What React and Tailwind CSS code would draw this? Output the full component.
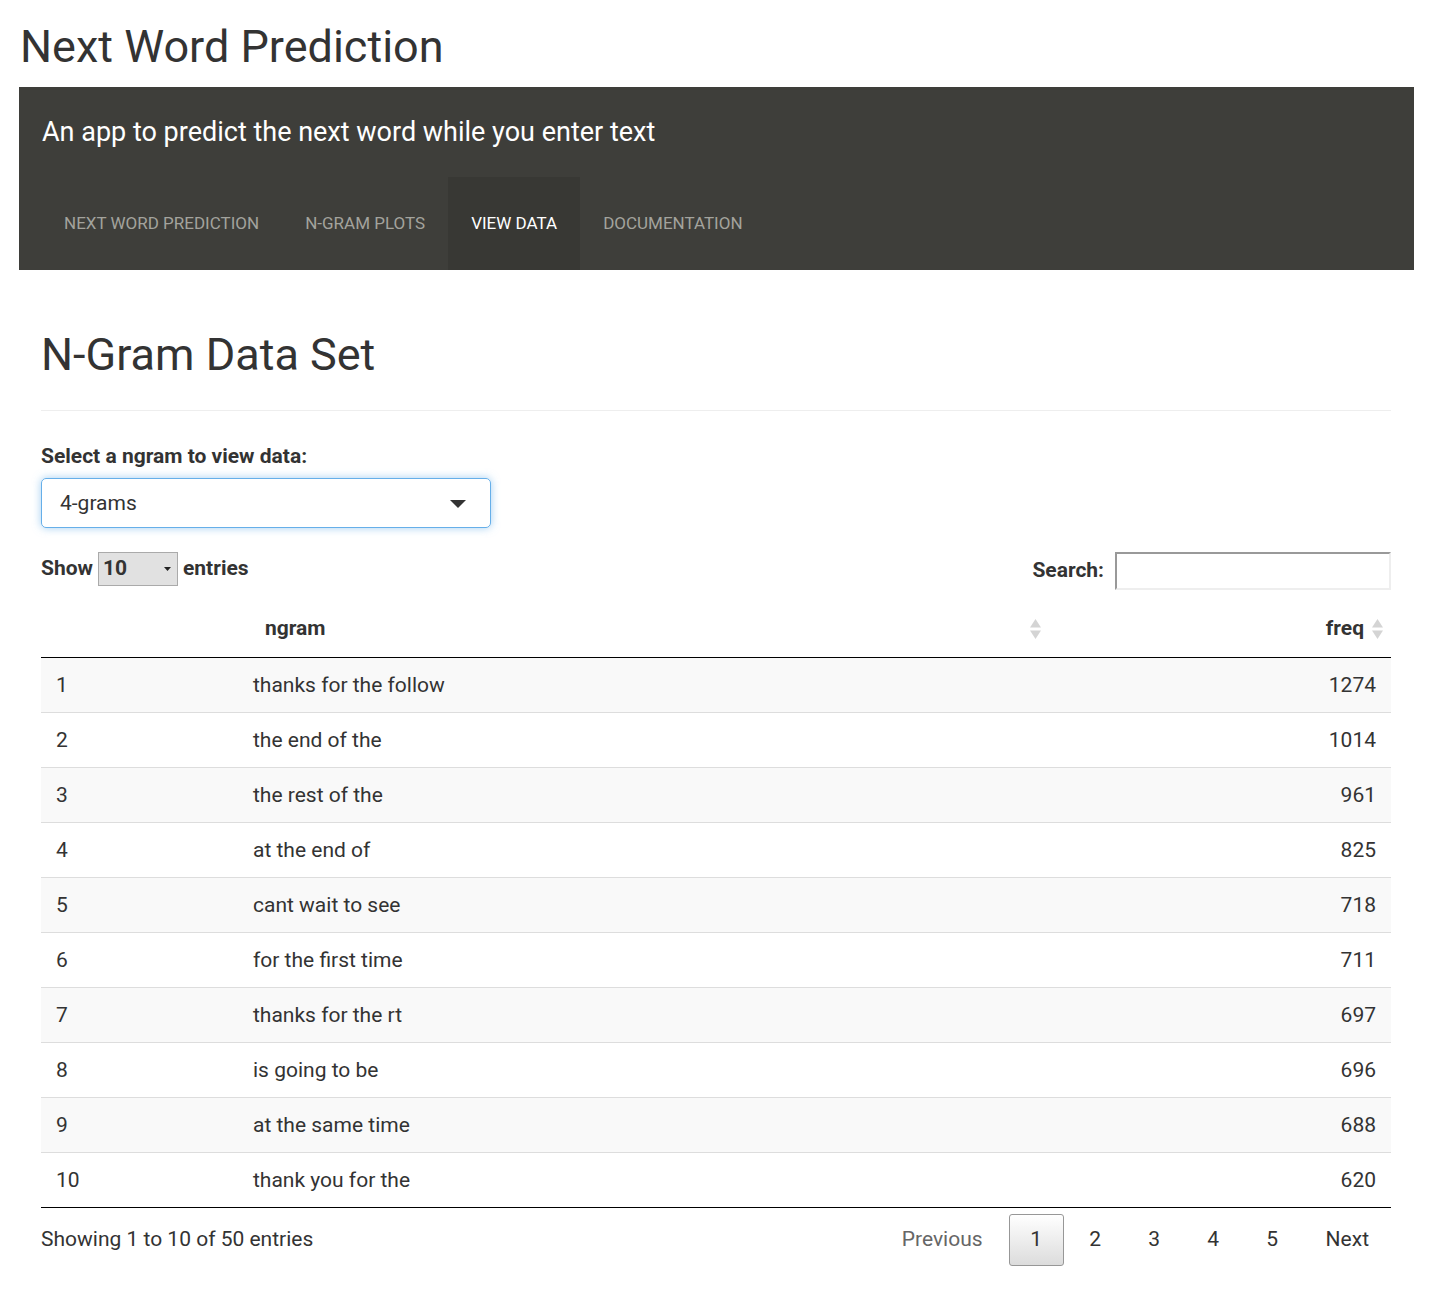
const rows = [
  ["1", "thanks for the follow", "1274"],
  ["2", "the end of the", "1014"],
  ["3", "the rest of the", "961"],
  ["4", "at the end of", "825"],
  ["5", "cant wait to see", "718"],
  ["6", "for the first time", "711"],
  ["7", "thanks for the rt", "697"],
  ["8", "is going to be", "696"],
  ["9", "at the same time", "688"],
  ["10", "thank you for the", "620"],
];

const tabs = ["Next Word Prediction", "N-Gram Plots", "View Data", "Documentation"];

function SortIcon({ className }) {
  return (
    <svg width="11" height="22" viewBox="0 0 11 22" className={className}>
      <path d="M5.5 1 L11 9.5 L0 9.5 Z" fill="#d4d4d4" />
      <path d="M0 12.5 L11 12.5 L5.5 21 Z" fill="#d4d4d4" />
    </svg>
  );
}

export default function App() {
  return (
    <div className="font-['Roboto',sans-serif] text-[#333] bg-white min-h-[1315px] pl-[19px] pr-[18px]">
      <h1 className="pt-[23px] text-[45px] leading-[48px] font-normal pl-[1px]">Next Word Prediction</h1>

      <div className="mt-[16px] bg-[#3e3e3a]">
        <div className="h-[90px] flex items-center px-[23px] text-white text-[27px]">
          An app to predict the next word while you enter text
        </div>
        <ul className="flex pl-[22px] h-[93px]">
          {tabs.map((t) => (
            <li
              key={t}
              className={
                t === "View Data"
                  ? "h-full flex items-center px-[23px] uppercase text-[17px] text-white bg-[#383834]"
                  : "h-full flex items-center px-[23px] uppercase text-[17px] text-[#a3a39d]"
              }
            >
              {t}
            </li>
          ))}
        </ul>
      </div>

      <div className="pl-[22px] pr-[23px]">
        <h2 className="mt-[61px] text-[45px] leading-[48px] font-normal">N-Gram Data Set</h2>
        <div className="mt-[31px] border-t border-[#eee]" />

        <div className="mt-[33px] text-[21px] leading-[24px] font-bold">Select a ngram to view data:</div>
        <div className="mt-[10px] w-[450px] h-[50px] border border-[#66afe9] rounded-[5px] shadow-[0_0_8px_rgba(102,175,233,0.6)] flex items-center justify-between pl-[18px] pr-[24px] pt-[1px] text-[21px]">
          <span>4-grams</span>
          <svg width="16" height="8" viewBox="0 0 16 8">
            <path d="M0 0 L16 0 L8 8 Z" fill="#333" />
          </svg>
        </div>

        <div className="mt-[24px] flex justify-between items-start">
          <div className="flex items-center h-[34px] text-[21px] font-bold">
            <span>Show</span>
            <div className="mx-[5px] w-[80px] h-[34px] bg-[#e1e1e1] border border-[#aaa] flex items-center justify-between pl-[4px] pr-[6px]">
              <span>10</span>
              <svg width="7" height="4" viewBox="0 0 7 4">
                <path d="M0 0 L7 0 L3.5 4 Z" fill="#222" />
              </svg>
            </div>
            <span>entries</span>
          </div>
          <div className="flex items-center h-[38px] text-[21px] font-bold">
            <span>Search:</span>
            <div className="ml-[11px] w-[276px] h-[38px] border-2 border-t-[#999] border-l-[#999] border-r-[#eee] border-b-[#eee] bg-white" />
          </div>
        </div>

        <div className="mt-[10px] text-[21px]">
          <div className="grid grid-cols-[202px_807px_1fr] h-[58px] border-b border-black font-bold items-center">
            <div />
            <div className="flex items-center justify-between pl-[22px] pr-[9px]">
              <span>ngram</span>
              <SortIcon />
            </div>
            <div className="flex items-center justify-end pr-[8px]">
              <span>freq</span>
              <SortIcon className="ml-[8px]" />
            </div>
          </div>
          {rows.map((r, i) => (
            <div
              key={r[0]}
              className={
                "grid grid-cols-[202px_807px_1fr] items-center pt-[2px] " +
                (i === 0 ? "h-[54px] " : "h-[55px] border-t border-[#ddd] ") +
                (i % 2 === 0 ? "bg-[#f9f9f9]" : "bg-white")
              }
            >
              <div className="pl-[15px]">{r[0]}</div>
              <div className="pl-[10px]">{r[1]}</div>
              <div className="text-right pr-[15px]">{r[2]}</div>
            </div>
          ))}
          <div className="border-t border-black" />
        </div>

        <div className="pt-[6px] flex justify-between items-center text-[21px]">
          <span>Showing 1 to 10 of 50 entries</span>
          <div className="flex items-center gap-[4px]">
            <span className="h-[52px] flex items-center px-[22px] text-[#666]">Previous</span>
            <span className="w-[55px] h-[52px] flex items-center justify-center border border-[#979797] rounded-[3px] bg-gradient-to-b from-white to-[#dcdcdc]">1</span>
            {["2", "3", "4", "5"].map((n) => (
              <span key={n} className="w-[55px] h-[52px] flex items-center justify-center">{n}</span>
            ))}
            <span className="h-[52px] flex items-center px-[22px]">Next</span>
          </div>
        </div>
      </div>
    </div>
  );
}
